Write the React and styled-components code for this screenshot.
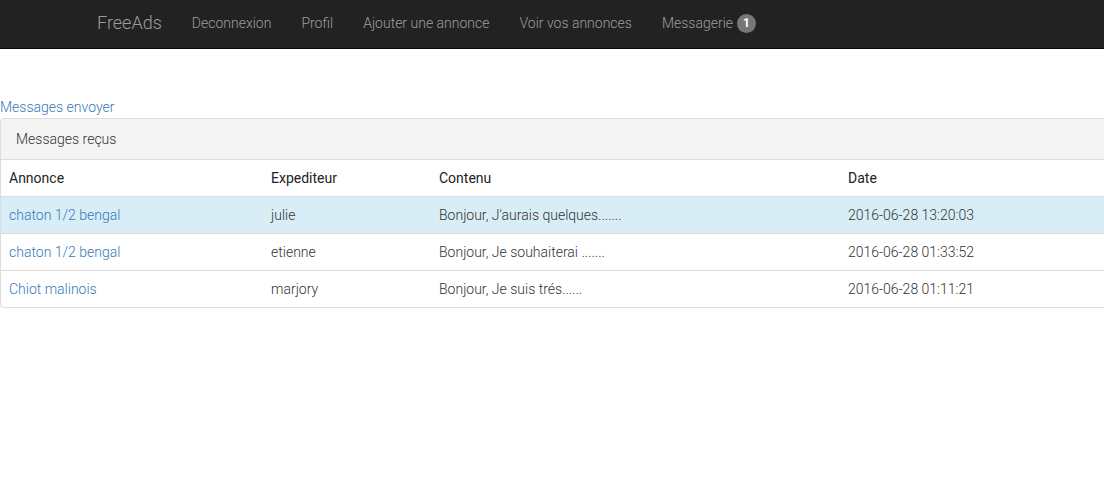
import React from 'react';
import styled, { createGlobalStyle } from 'styled-components';

const messages = [
    { id: 1, annonce: 'chaton 1/2 bengal', from: 'julie', content: "Bonjour, J'aurais quelques.......", date: '2016-06-28 13:20:03', unread: true },
    { id: 2, annonce: 'chaton 1/2 bengal', from: 'etienne', content: 'Bonjour, Je souhaiterai .......', date: '2016-06-28 01:33:52' },
    { id: 3, annonce: 'Chiot malinois', from: 'marjory', content: 'Bonjour, Je suis trés......', date: '2016-06-28 01:11:21' },
];

const navLinks = ['Deconnexion', 'Profil', 'Ajouter une annonce', 'Voir vos annonces'];

function App() {
    return (
        <>
            <GlobalStyle />
            <Navbar>
                <NavContainer>
                    <Brand href="#">FreeAds</Brand>
                    <NavList>
                        {navLinks.map((label) => (
                            <li key={label}>
                                <NavLink href="#">{label}</NavLink>
                            </li>
                        ))}
                        <li>
                            <NavLink href="#">
                                Messagerie <Badge>1</Badge>
                            </NavLink>
                        </li>
                    </NavList>
                </NavContainer>
            </Navbar>

            <Content>
                <TextLink href="#">Messages envoyer</TextLink>
                <Panel>
                    <PanelHeading>Messages reçus</PanelHeading>
                    <Table>
                        <colgroup>
                            <col style={{ width: 262 }} />
                            <col style={{ width: 168 }} />
                            <col style={{ width: 409 }} />
                            <col />
                        </colgroup>
                        <thead>
                            <tr>
                                <th>Annonce</th>
                                <th>Expediteur</th>
                                <th>Contenu</th>
                                <th>Date</th>
                            </tr>
                        </thead>
                        <tbody>
                            {messages.map((m) => (
                                <Row key={m.id} $active={m.unread}>
                                    <td><TextLink href="#">{m.annonce}</TextLink></td>
                                    <td>{m.from}</td>
                                    <td>{m.content}</td>
                                    <td>{m.date}</td>
                                </Row>
                            ))}
                        </tbody>
                    </Table>
                </Panel>
            </Content>
        </>
    );
}

export default App;

const GlobalStyle = createGlobalStyle`
    * { box-sizing: border-box; }

    html, body {
        margin: 0;
        overflow-x: hidden;
    }

    body {
        font-family: Roboto, 'Liberation Sans', sans-serif;
        font-weight: 300;
        font-size: 14px;
        line-height: 20px;
        color: #333;
        background: #fff;
    }
`;

const Navbar = styled.nav`
    background-color: #222;
    border-bottom: 1px solid #080808;
    height: 49px;
`;

const NavContainer = styled.div`
    width: 940px;
    margin: 0 auto;
    padding: 0 15px;
    display: flex;
    align-items: center;
    height: 48px;
`;

const Brand = styled.a`
    color: #9d9d9d;
    font-size: 18px;
    line-height: 20px;
    padding: 13px 15px 15px 0;
    text-decoration: none;
`;

const NavList = styled.ul`
    display: flex;
    list-style: none;
    margin: 0;
    padding: 0;
`;

const NavLink = styled.a`
    display: flex;
    align-items: center;
    gap: 4px;
    color: #9d9d9d;
    padding: 13px 15px 15px;
    text-decoration: none;
    font-size: 14px;
`;

const Badge = styled.span`
    display: inline-block;
    min-width: 19px;
    height: 19px;
    padding: 0 6px;
    border-radius: 10px;
    background-color: #777;
    color: #fff;
    font-size: 12px;
    font-weight: 700;
    line-height: 19px;
    text-align: center;
`;

const Content = styled.div`
    padding-top: 48px;
`;

const TextLink = styled.a`
    color: #337ab7;
    text-decoration: none;
`;

const Panel = styled.div`
    width: 1140px;
    margin-top: 1px;
    border: 1px solid #ddd;
    border-radius: 4px;
    overflow: hidden;
    box-shadow: 0 1px 1px rgba(0, 0, 0, 0.05);
`;

const PanelHeading = styled.div`
    padding: 10px 15px;
    background-color: #f4f4f4;
    border-bottom: 1px solid #ddd;
    color: #333;
`;

const Table = styled.table`
    width: 100%;
    border-collapse: collapse;
    table-layout: fixed;

    th, td {
        padding: 8px;
        text-align: left;
        line-height: 20px;
        white-space: nowrap;
    }

    th {
        font-weight: 400;
        color: #222;
        border-bottom: 1px solid #ddd;
    }

    tbody tr + tr td {
        border-top: 1px solid #ddd;
    }
`;

const Row = styled.tr`
    td {
        background-color: ${(p) => (p.$active ? '#d9edf7' : 'transparent')};
    }
`;
